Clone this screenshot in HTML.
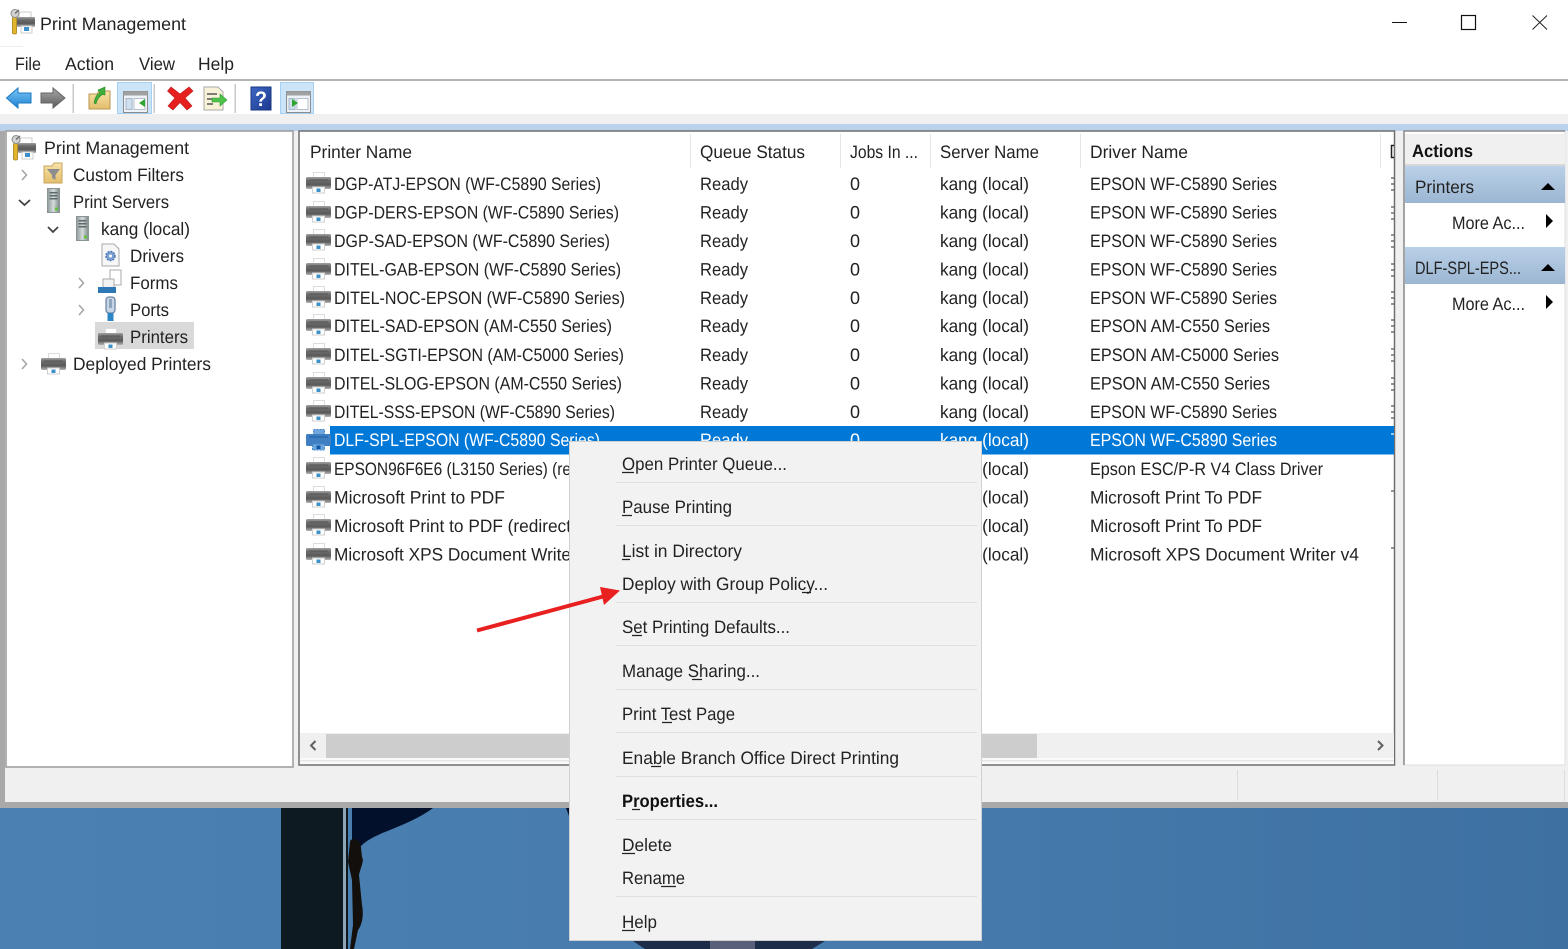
<!DOCTYPE html>
<html><head><meta charset="utf-8"><title>Print Management</title>
<style>
html,body{margin:0;padding:0;width:1568px;height:949px;overflow:hidden;background:#fff}
svg{display:block}
text{font-family:"Liberation Sans",sans-serif;font-size:18px;fill:#222;text-rendering:geometricPrecision}
.w text,text.w{fill:#fff}
.b{font-weight:bold;fill:#111}
</style></head><body>
<svg width="1568" height="949" viewBox="0 0 1568 949" xmlns="http://www.w3.org/2000/svg">
<defs>
<linearGradient id="desk" x1="0" x2="1" y1="0" y2="0"><stop offset="0" stop-color="#4a80b2"/><stop offset=".6" stop-color="#467aac"/><stop offset="1" stop-color="#3e71a2"/></linearGradient>
<linearGradient id="band" x1="0" x2="0" y1="0" y2="1"><stop offset="0" stop-color="#b9d0e8"/><stop offset="1" stop-color="#9cb6d2"/></linearGradient>
<linearGradient id="pbody" x1="0" x2="0" y1="0" y2="1"><stop offset="0" stop-color="#a0a0a0"/><stop offset=".3" stop-color="#6a6a6a"/><stop offset=".65" stop-color="#5a5a5a"/><stop offset="1" stop-color="#b4b4b4"/></linearGradient>
<linearGradient id="srv" x1="0" x2="1" y1="0" y2="0"><stop offset="0" stop-color="#8f9a9a"/><stop offset=".5" stop-color="#d5dbdb"/><stop offset="1" stop-color="#7d8888"/></linearGradient>
<linearGradient id="fold" x1="0" x2="0" y1="0" y2="1"><stop offset="0" stop-color="#f8e3a8"/><stop offset="1" stop-color="#e2bd6c"/></linearGradient>
<linearGradient id="blueA" x1="0" x2="0" y1="0" y2="1"><stop offset="0" stop-color="#7cc6f5"/><stop offset="1" stop-color="#1c82d2"/></linearGradient>
<linearGradient id="grayA" x1="0" x2="0" y1="0" y2="1"><stop offset="0" stop-color="#a8a8a8"/><stop offset="1" stop-color="#5c5c5c"/></linearGradient>
<linearGradient id="helpG" x1="0" x2="1" y1="0" y2="1"><stop offset="0" stop-color="#3d67c4"/><stop offset="1" stop-color="#1c3a8e"/></linearGradient>
<g id="pr">
<rect x="7.500" y=".5" width="11" height="7" fill="#fff" stroke="#dcdcdc"/>
<rect x="0" y="5" width="25" height="12" rx="1.500" fill="url(#pbody)"/>
<rect x="3" y="7.500" width="19" height="1" fill="#555"/>
<rect x="6.500" y="15" width="12" height="6" fill="#fff" stroke="#cfcfcf"/>
<rect x="10.500" y="16.500" width="4" height="3.500" fill="#3b8fca"/>
</g>
<g id="prs">
<rect x="7.500" y=".5" width="11" height="7" fill="#6fa6dc" stroke="#3f86cc" stroke-dasharray="2 1"/>
<rect x="0" y="5" width="25" height="12" rx="1.500" fill="#3f7fc2"/>
<rect x="3" y="7.500" width="19" height="1" fill="#1d5fa6"/>
<rect x="6.500" y="15" width="12" height="6" fill="#6fa6dc" stroke="#3f86cc" stroke-dasharray="2 1"/>
<rect x="10.500" y="16.500" width="4" height="3.500" fill="#0f5aa8"/>
</g>
<g id="srvi">
<rect x=".5" y=".5" width="12" height="24" fill="url(#srv)" stroke="#8a9494"/>
<rect x="2.500" y="4" width="8" height="1.500" fill="#5f6a6a"/>
<rect x="2.500" y="7" width="8" height="1.500" fill="#5f6a6a"/>
<rect x="2.500" y="10" width="8" height="1.500" fill="#5f6a6a"/>
<rect x="8" y="19.500" width="3" height="3" fill="#5fc43f"/>
</g>
<g id="mgmt">
<rect x="9" y="3" width="12" height="7" fill="#fff" stroke="#ccc"/>
<rect x="7" y="8" width="18" height="10" rx="1" fill="url(#pbody)"/>
<rect x="11" y="17" width="11" height="7" fill="#fff" stroke="#ccc"/>
<rect x="14" y="18" width="5" height="4" fill="#3b8fca"/>
<rect x="2.500" y="8" width="4" height="17" rx="1.500" fill="#e3b52c" stroke="#a67f14" stroke-width=".8"/>
<circle cx="5" cy="4.500" r="4" fill="#d3d3d3" stroke="#8b8b8b"/>
<path d="M5 4.500 L9 1" stroke="#777" stroke-width="1.500"/>
</g>
<g id="win">
<rect x=".5" y=".5" width="24" height="21" fill="#eef2f6" stroke="#8c8c8c"/>
<rect x=".5" y=".5" width="24" height="4" fill="#a0a0a0"/>
<rect x="3" y="7.500" width="6" height="11" fill="#d2dfee" stroke="#8aa3bd" stroke-width=".7"/>
<rect x="11" y="7.500" width="11" height="11" fill="#fff" stroke="#9ab" stroke-width=".7"/>
</g>
</defs>

<!-- desktop -->
<rect x="0" y="808" width="1568" height="141" fill="url(#desk)"/>
<rect x="281" y="808" width="62" height="141" fill="#0e1a22"/>
<rect x="343" y="808" width="3" height="141" fill="#8fa6b6"/>
<rect x="346" y="808" width="2" height="141" fill="#10181f"/>
<path d="M352 808H433C420 818 400 826 385 832C372 837 362 843 358 850L352 842Z" fill="#03102c"/>
<path d="M350 842C350 838 358 838 360 843C362 850 361 855 363 860C362 866 360 870 359 875L362 905C364 915 362 925 358 930L354 949H350L353 925L352 880L348 862Z" fill="#120f0c"/>
<path d="M566 808H569V816Z" fill="#03102c"/>
<path d="M633 941H825L812 949H645Z" fill="#1d2c48"/>
<rect x="710" y="941" width="45" height="8" fill="#59617a"/>

<!-- window chrome -->
<rect x="0" y="0" width="1568" height="114" fill="#fff"/>
<rect x="0" y="46" width="23" height="1" fill="#eeeeee"/>
<rect x="0" y="79" width="1568" height="2" fill="#b4b4b4"/>
<rect x="0" y="114" width="1568" height="10" fill="#f0f0f0"/>
<rect x="0" y="124" width="1568" height="7" fill="#b9d1ea"/>
<rect x="0" y="131" width="1568" height="671" fill="#f0f0f0"/>
<rect x="0" y="131" width="5" height="671" fill="#a9a9a9"/>
<rect x="0" y="802" width="1568" height="6" fill="#a9a9a9"/>

<!-- title -->
<use href="#mgmt" x="10" y="9"/>
<text x="40" y="30" textLength="146" lengthAdjust="spacingAndGlyphs">Print Management</text>
<path d="M1392 22.500H1407" stroke="#111" stroke-width="1"/>
<rect x="1461.500" y="15.500" width="14" height="14" fill="none" stroke="#111" stroke-width="1.200"/>
<path d="M1532.500 15.500L1547 29.500M1547 15.500L1532.500 29.500" stroke="#222" stroke-width="1"/>

<!-- menu -->
<text x="15" y="70" textLength="26" lengthAdjust="spacingAndGlyphs">File</text>
<text x="65" y="70" textLength="49" lengthAdjust="spacingAndGlyphs">Action</text>
<text x="139" y="70" textLength="36" lengthAdjust="spacingAndGlyphs">View</text>
<text x="198" y="70" textLength="36" lengthAdjust="spacingAndGlyphs">Help</text>

<!-- toolbar -->
<path d="M6.500 98L18 88V93H31V103H18V108Z" fill="url(#blueA)" stroke="#1c7ac4" stroke-width="1"/>
<path d="M65 98L53 88V93H41V103H53V108Z" fill="url(#grayA)" stroke="#666" stroke-width="1"/>
<rect x="72.500" y="84" width="1.500" height="29" fill="#c8c8c8"/>
<path d="M89 94H97L99 91H110V109H89Z" fill="url(#fold)" stroke="#b8964e"/>
<path d="M94 103C95 97 97 94 100 93L98 90L105 87V95L102.500 94.500C100 96 97 99 96 104Z" fill="#3fae3a" stroke="#2c8a2c" stroke-width=".6"/>
<rect x="117.500" y="82.500" width="34" height="31" fill="#cce4f7" stroke="#a6d0f2"/>
<use href="#win" x="123" y="91"/>
<path d="M146 99L140 103L146 107Z" transform="translate(-1,0)" fill="#2ea52e"/>
<rect x="153.500" y="84" width="1.500" height="29" fill="#c8c8c8"/>
<path d="M171 87L180 94L189 87L193 91L185 98L192 106L187 110L180 102.500L173 110L168 106L175 98L167.500 91Z" fill="#e5201f" stroke="#c01818" stroke-width=".6"/>
<path d="M204 87H218L223 92V110H204Z" fill="#f8f3d8" stroke="#aaa"/>
<path d="M207 94H217M207 99H213M207 104H213" stroke="#555" stroke-width="1.500"/>
<path d="M212 98H220V94L227 100L220 106V102H212Z" fill="#4ec24a" stroke="#2f9a2f" stroke-width=".6"/>
<rect x="234.500" y="84" width="1.500" height="29" fill="#c8c8c8"/>
<rect x="251" y="87" width="20" height="23" fill="url(#helpG)" stroke="#1a3684"/>
<text x="255" y="106" textLength="12" lengthAdjust="spacingAndGlyphs" style="font-size:21px;font-weight:bold;fill:#fff">?</text>
<rect x="280.500" y="82.500" width="33" height="31" fill="#cce4f7" stroke="#a6d0f2"/>
<use href="#win" x="286" y="91"/>
<path d="M292 99L298 103L292 107Z" fill="#2ea52e"/>

<!-- left pane -->
<rect x="6" y="131" width="287" height="636" fill="#fff" stroke="#9a9a9a" stroke-width="1.500"/>
<use href="#mgmt" x="11" y="135"/>
<text x="44" y="154" textLength="145" lengthAdjust="spacingAndGlyphs">Print Management</text>
<path d="M22 170L26.500 175L22 180" fill="none" stroke="#a6a6a6" stroke-width="1.600"/>
<path d="M44 166H52L54 163H62V183H44Z" fill="url(#fold)" stroke="#c9a65c"/>
<path d="M47 169H60L55.500 175V180L52 178V175Z" fill="#8d8d8d"/>
<text x="73" y="181" textLength="111" lengthAdjust="spacingAndGlyphs">Custom Filters</text>
<path d="M19 200L24.500 205L30 200" fill="none" stroke="#444" stroke-width="1.800"/>
<use href="#srvi" x="47" y="188"/>
<text x="73" y="208" textLength="96" lengthAdjust="spacingAndGlyphs">Print Servers</text>
<path d="M48 227L53 232L58 227" fill="none" stroke="#444" stroke-width="1.800"/>
<use href="#srvi" x="76" y="216"/>
<text x="101" y="235" textLength="89" lengthAdjust="spacingAndGlyphs">kang (local)</text>
<path d="M102 244H114L119 249V266H102Z" fill="#f7f7f7" stroke="#aaa"/>
<circle cx="110.500" cy="256" r="4.500" fill="#7b9fd0" stroke="#4f78b5" stroke-width="1.500" stroke-dasharray="2 1"/>
<circle cx="110.500" cy="256" r="1.500" fill="#fff"/>
<text x="130" y="262" textLength="54" lengthAdjust="spacingAndGlyphs">Drivers</text>
<path d="M79 278L83.500 283L79 288" fill="none" stroke="#a6a6a6" stroke-width="1.600"/>
<path d="M110 270H121V285H110Z" fill="#fff" stroke="#aaa"/>
<path d="M103 279H114V290H103Z" fill="#f2f2f2" stroke="#aaa"/>
<rect x="98" y="287" width="18" height="6" fill="#2f78b8"/>
<text x="130" y="289" textLength="48" lengthAdjust="spacingAndGlyphs">Forms</text>
<path d="M79 305L83.500 310L79 315" fill="none" stroke="#a6a6a6" stroke-width="1.600"/>
<rect x="106" y="297" width="9" height="16" rx="3" fill="#c7d5e6" stroke="#6f89a8" stroke-width="1.300"/>
<rect x="109" y="299" width="3" height="9" fill="#8ea5c0"/>
<rect x="107.500" y="313" width="6" height="8" fill="#2b86c6"/>
<text x="130" y="316" textLength="39" lengthAdjust="spacingAndGlyphs">Ports</text>
<rect x="95" y="322" width="99" height="27" fill="#d9d9d9"/>
<use href="#pr" x="98" y="328"/>
<text x="130" y="343" textLength="58" lengthAdjust="spacingAndGlyphs">Printers</text>
<path d="M22 359L26.500 364L22 369" fill="none" stroke="#a6a6a6" stroke-width="1.600"/>
<use href="#pr" x="41" y="353"/>
<text x="73" y="370" textLength="138" lengthAdjust="spacingAndGlyphs">Deployed Printers</text>

<!-- centre pane -->
<rect x="299" y="131" width="1095.500" height="634" fill="#fff" stroke="#6e6e6e" stroke-width="1.500"/>
<path d="M690.500 134V168M840.500 134V168M930.500 134V168M1080.500 134V168M1380.500 134V168" stroke="#e5e5e5"/>
<text x="310" y="158" textLength="102" lengthAdjust="spacingAndGlyphs">Printer Name</text>
<text x="700" y="158" textLength="105" lengthAdjust="spacingAndGlyphs">Queue Status</text>
<text x="850" y="158" textLength="68" lengthAdjust="spacingAndGlyphs">Jobs In ...</text>
<text x="940" y="158" textLength="99" lengthAdjust="spacingAndGlyphs">Server Name</text>
<text x="1090" y="158" textLength="98" lengthAdjust="spacingAndGlyphs">Driver Name</text>
<path d="M1394 145.500H1391.500V157.500H1394" fill="none" stroke="#222" stroke-width="1.500"/>

<rect x="330" y="426" width="1064" height="28.500" fill="#0078d7"/>
<use href="#pr" x="306" y="172"/>
<use href="#pr" x="306" y="201"/>
<use href="#pr" x="306" y="229"/>
<use href="#pr" x="306" y="258"/>
<use href="#pr" x="306" y="286"/>
<use href="#pr" x="306" y="314"/>
<use href="#pr" x="306" y="343"/>
<use href="#pr" x="306" y="372"/>
<use href="#pr" x="306" y="400"/>
<use href="#prs" x="306" y="429"/>
<use href="#pr" x="306" y="457"/>
<use href="#pr" x="306" y="486"/>
<use href="#pr" x="306" y="514"/>
<use href="#pr" x="306" y="543"/>

<text x="334" y="190" textLength="267" lengthAdjust="spacingAndGlyphs">DGP-ATJ-EPSON (WF-C5890 Series)</text>
<text x="334" y="218.500" textLength="285" lengthAdjust="spacingAndGlyphs">DGP-DERS-EPSON (WF-C5890 Series)</text>
<text x="334" y="247" textLength="276" lengthAdjust="spacingAndGlyphs">DGP-SAD-EPSON (WF-C5890 Series)</text>
<text x="334" y="275.500" textLength="287" lengthAdjust="spacingAndGlyphs">DITEL-GAB-EPSON (WF-C5890 Series)</text>
<text x="334" y="304" textLength="291" lengthAdjust="spacingAndGlyphs">DITEL-NOC-EPSON (WF-C5890 Series)</text>
<text x="334" y="332" textLength="278" lengthAdjust="spacingAndGlyphs">DITEL-SAD-EPSON (AM-C550 Series)</text>
<text x="334" y="361" textLength="290" lengthAdjust="spacingAndGlyphs">DITEL-SGTI-EPSON (AM-C5000 Series)</text>
<text x="334" y="389.500" textLength="288" lengthAdjust="spacingAndGlyphs">DITEL-SLOG-EPSON (AM-C550 Series)</text>
<text x="334" y="418" textLength="281" lengthAdjust="spacingAndGlyphs">DITEL-SSS-EPSON (WF-C5890 Series)</text>
<text x="334" y="446" textLength="266" lengthAdjust="spacingAndGlyphs" class="w">DLF-SPL-EPSON (WF-C5890 Series)</text>
<text x="334" y="475" textLength="237" lengthAdjust="spacingAndGlyphs">EPSON96F6E6 (L3150 Series) (re</text>
<text x="334" y="503.500" textLength="171" lengthAdjust="spacingAndGlyphs">Microsoft Print to PDF</text>
<text x="334" y="532" textLength="237" lengthAdjust="spacingAndGlyphs">Microsoft Print to PDF (redirect</text>
<text x="334" y="560.500" textLength="237" lengthAdjust="spacingAndGlyphs">Microsoft XPS Document Write</text>

<text x="700" y="190" textLength="48" lengthAdjust="spacingAndGlyphs">Ready</text>
<text x="700" y="218.500" textLength="48" lengthAdjust="spacingAndGlyphs">Ready</text>
<text x="700" y="247" textLength="48" lengthAdjust="spacingAndGlyphs">Ready</text>
<text x="700" y="275.500" textLength="48" lengthAdjust="spacingAndGlyphs">Ready</text>
<text x="700" y="304" textLength="48" lengthAdjust="spacingAndGlyphs">Ready</text>
<text x="700" y="332" textLength="48" lengthAdjust="spacingAndGlyphs">Ready</text>
<text x="700" y="361" textLength="48" lengthAdjust="spacingAndGlyphs">Ready</text>
<text x="700" y="389.500" textLength="48" lengthAdjust="spacingAndGlyphs">Ready</text>
<text x="700" y="418" textLength="48" lengthAdjust="spacingAndGlyphs">Ready</text>
<text x="700" y="446" textLength="48" lengthAdjust="spacingAndGlyphs" class="w">Ready</text>

<text x="850" y="190">0</text>
<text x="850" y="218.500">0</text>
<text x="850" y="247">0</text>
<text x="850" y="275.500">0</text>
<text x="850" y="304">0</text>
<text x="850" y="332">0</text>
<text x="850" y="361">0</text>
<text x="850" y="389.500">0</text>
<text x="850" y="418">0</text>
<text x="850" y="446" class="w">0</text>

<text x="940" y="190" textLength="89" lengthAdjust="spacingAndGlyphs">kang (local)</text>
<text x="940" y="218.500" textLength="89" lengthAdjust="spacingAndGlyphs">kang (local)</text>
<text x="940" y="247" textLength="89" lengthAdjust="spacingAndGlyphs">kang (local)</text>
<text x="940" y="275.500" textLength="89" lengthAdjust="spacingAndGlyphs">kang (local)</text>
<text x="940" y="304" textLength="89" lengthAdjust="spacingAndGlyphs">kang (local)</text>
<text x="940" y="332" textLength="89" lengthAdjust="spacingAndGlyphs">kang (local)</text>
<text x="940" y="361" textLength="89" lengthAdjust="spacingAndGlyphs">kang (local)</text>
<text x="940" y="389.500" textLength="89" lengthAdjust="spacingAndGlyphs">kang (local)</text>
<text x="940" y="418" textLength="89" lengthAdjust="spacingAndGlyphs">kang (local)</text>
<text x="940" y="446" textLength="89" lengthAdjust="spacingAndGlyphs" class="w">kang (local)</text>
<text x="940" y="475" textLength="89" lengthAdjust="spacingAndGlyphs">kang (local)</text>
<text x="940" y="503.500" textLength="89" lengthAdjust="spacingAndGlyphs">kang (local)</text>
<text x="940" y="532" textLength="89" lengthAdjust="spacingAndGlyphs">kang (local)</text>
<text x="940" y="560.500" textLength="89" lengthAdjust="spacingAndGlyphs">kang (local)</text>

<text x="1090" y="190" textLength="187" lengthAdjust="spacingAndGlyphs">EPSON WF-C5890 Series</text>
<text x="1090" y="218.500" textLength="187" lengthAdjust="spacingAndGlyphs">EPSON WF-C5890 Series</text>
<text x="1090" y="247" textLength="187" lengthAdjust="spacingAndGlyphs">EPSON WF-C5890 Series</text>
<text x="1090" y="275.500" textLength="187" lengthAdjust="spacingAndGlyphs">EPSON WF-C5890 Series</text>
<text x="1090" y="304" textLength="187" lengthAdjust="spacingAndGlyphs">EPSON WF-C5890 Series</text>
<text x="1090" y="332" textLength="180" lengthAdjust="spacingAndGlyphs">EPSON AM-C550 Series</text>
<text x="1090" y="361" textLength="189" lengthAdjust="spacingAndGlyphs">EPSON AM-C5000 Series</text>
<text x="1090" y="389.500" textLength="180" lengthAdjust="spacingAndGlyphs">EPSON AM-C550 Series</text>
<text x="1090" y="418" textLength="187" lengthAdjust="spacingAndGlyphs">EPSON WF-C5890 Series</text>
<text x="1090" y="446" textLength="187" lengthAdjust="spacingAndGlyphs" class="w">EPSON WF-C5890 Series</text>
<text x="1090" y="475" textLength="233" lengthAdjust="spacingAndGlyphs">Epson ESC/P-R V4 Class Driver</text>
<text x="1090" y="503.500" textLength="172" lengthAdjust="spacingAndGlyphs">Microsoft Print To PDF</text>
<text x="1090" y="532" textLength="172" lengthAdjust="spacingAndGlyphs">Microsoft Print To PDF</text>
<text x="1090" y="560.500" textLength="269" lengthAdjust="spacingAndGlyphs">Microsoft XPS Document Writer v4</text>

<path d="M1391 178h3M1391 184h3M1391 190h3M1391 207h3M1391 213h3M1391 219h3M1391 235h3M1391 241h3M1391 247h3M1391 264h3M1391 270h3M1391 276h3M1391 292h3M1391 298h3M1391 304h3M1391 320h3M1391 326h3M1391 332h3M1391 349h3M1391 355h3M1391 361h3M1391 378h3M1391 384h3M1391 390h3M1391 406h3M1391 412h3M1391 418h3" stroke="#555" stroke-width="1.200"/>
<path d="M1391 434h3" stroke="#fff" stroke-width="1.200"/>
<path d="M1391 491h3M1391 548h3" stroke="#555" stroke-width="1.200"/>

<!-- scrollbar -->
<rect x="300" y="733" width="1094" height="25" fill="#f0f0f0"/>
<rect x="326" y="734" width="711" height="24" fill="#cdcdcd"/>
<rect x="300" y="758" width="1094" height="6" fill="#fafafa"/>
<rect x="300" y="760" width="1094" height="1.500" fill="#e6e6e6"/>
<path d="M315.500 741L311 745.500L315.500 750" fill="none" stroke="#606060" stroke-width="2"/>
<path d="M1378 741L1382.500 745.500L1378 750" fill="none" stroke="#606060" stroke-width="2"/>

<!-- actions -->
<rect x="1404" y="131" width="161" height="634" fill="#fff" stroke="#e2e2e2" stroke-width="1.200"/>
<path d="M1404 765V131H1565" fill="none" stroke="#8a8a8a" stroke-width="1.500"/>
<rect x="1405" y="134" width="160" height="30" fill="#f0f0f0"/>
<rect x="1405" y="164" width="160" height="2" fill="#d8d8d8"/>
<text x="1412" y="157" textLength="61" lengthAdjust="spacingAndGlyphs" class="b">Actions</text>
<rect x="1405" y="166" width="160" height="37" fill="url(#band)"/>
<text x="1415" y="193" textLength="59" lengthAdjust="spacingAndGlyphs">Printers</text>
<path d="M1541 190L1548 183L1555 190Z" fill="#000"/>
<text x="1452" y="229" textLength="73" lengthAdjust="spacingAndGlyphs">More Ac...</text>
<path d="M1546 214L1553 221L1546 228Z" fill="#000"/>
<rect x="1405" y="247" width="160" height="37" fill="url(#band)"/>
<text x="1415" y="274" textLength="106" lengthAdjust="spacingAndGlyphs">DLF-SPL-EPS...</text>
<path d="M1541 271L1548 264L1555 271Z" fill="#000"/>
<text x="1452" y="310" textLength="73" lengthAdjust="spacingAndGlyphs">More Ac...</text>
<path d="M1546 295L1553 302L1546 309Z" fill="#000"/>

<!-- status bar -->
<path d="M1237.500 770V801M1437.500 770V801M1564.500 770V801" stroke="#dcdcdc"/>

<!-- context menu -->
<rect x="569.500" y="441.500" width="412" height="499" fill="#f2f2f2" stroke="#d0d0d0"/>
<path d="M616 482.500H977M616 525.500H977M616 602.500H977M616 645.500H977M616 689.500H977M616 732.500H977M616 776.500H977M616 819.500H977M616 896.500H977" stroke="#dfdfdf"/>
<text x="622" y="470" textLength="165" lengthAdjust="spacingAndGlyphs">Open Printer Queue...</text>
<text x="622" y="513" textLength="110" lengthAdjust="spacingAndGlyphs">Pause Printing</text>
<text x="622" y="557" textLength="120" lengthAdjust="spacingAndGlyphs">List in Directory</text>
<text x="622" y="590" textLength="206" lengthAdjust="spacingAndGlyphs">Deploy with Group Policy...</text>
<text x="622" y="633" textLength="168" lengthAdjust="spacingAndGlyphs">Set Printing Defaults...</text>
<text x="622" y="677" textLength="138" lengthAdjust="spacingAndGlyphs">Manage Sharing...</text>
<text x="622" y="720" textLength="113" lengthAdjust="spacingAndGlyphs">Print Test Page</text>
<text x="622" y="764" textLength="277" lengthAdjust="spacingAndGlyphs">Enable Branch Office Direct Printing</text>
<text x="622" y="807" textLength="96" lengthAdjust="spacingAndGlyphs" class="b">Properties...</text>
<text x="622" y="851" textLength="50" lengthAdjust="spacingAndGlyphs">Delete</text>
<text x="622" y="884" textLength="63" lengthAdjust="spacingAndGlyphs">Rename</text>
<text x="622" y="928" textLength="35" lengthAdjust="spacingAndGlyphs">Help</text>
<path d="M622 472.500H634M622 515.500H632M622 559.500H630M802 592.500H811M632 635.500H642M692 679.500H702M662 722.500H672M651 766.500H661M632 809.500H640M622 853.500H635M661 886.500H676M622 930.500H635" stroke="#222" stroke-width="1.200"/>

<!-- arrow -->
<path d="M477 630.500L605 596" stroke="#e8201f" stroke-width="4"/>
<path d="M600 587L620 590.500L604 605Z" fill="#e8201f"/>
</svg>
</body></html>
